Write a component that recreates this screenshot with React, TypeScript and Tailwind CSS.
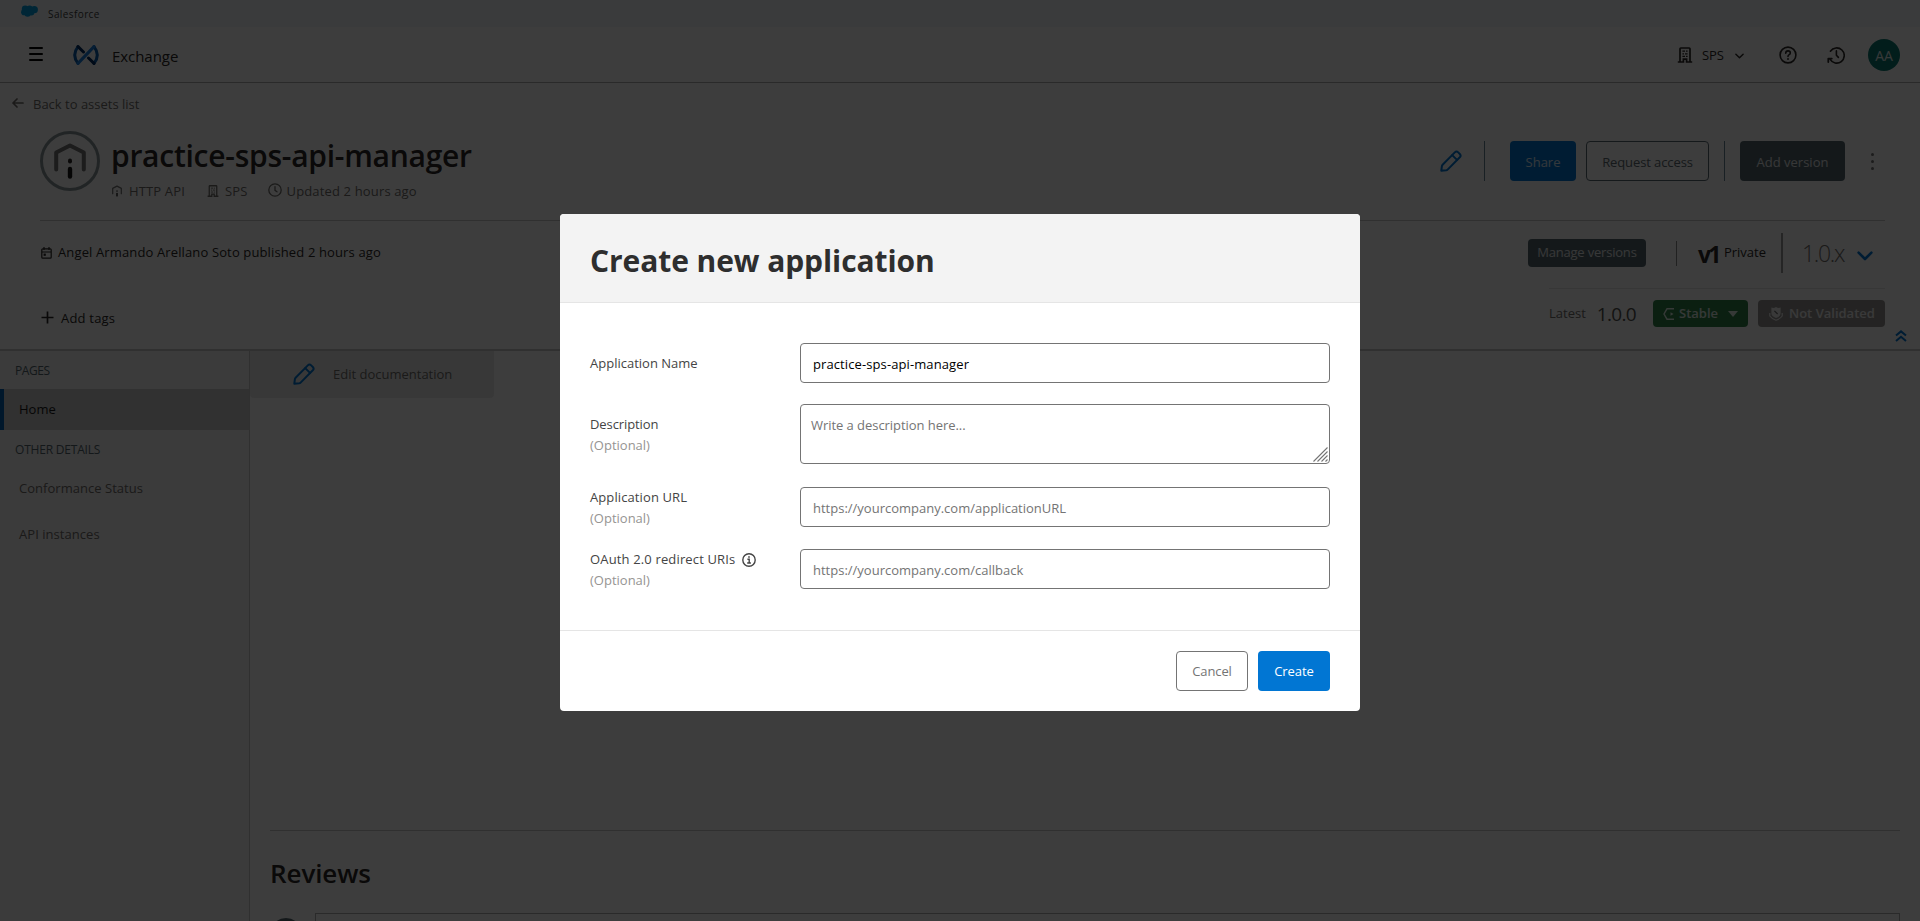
import type { ReactNode } from "react";

function Pencil({ className = "" }: { className?: string }) {
  return (
    <svg viewBox="0 0 22 22" fill="none" stroke="currentColor" strokeWidth="2" strokeLinejoin="round" strokeLinecap="round" className={`h-[22px] w-[22px] ${className}`}>
      <path d="M1.3 20.7L1.9 16.2Q2 15.4 2.6 14.8L14.8 2.4Q16.5 0.7 18.2 2.4L19.8 4Q21.4 5.7 19.8 7.3L7.6 19.6Q7 20.2 6.2 20.3Z" />
      <path d="M12.2 5.1L17 9.9" />
    </svg>
  );
}

function Building({ className = "" }: { className?: string }) {
  return (
    <svg viewBox="0 0 16 16" fill="none" stroke="currentColor" strokeWidth="1.7" className={className}>
      <path d="M3 15V1.8Q3 1 3.8 1H12.2Q13 1 13 1.8V15" />
      <path d="M0.8 15H6.4V12.2H9.6V15H15.2" />
      <path d="M5.4 4.2H8M9 4.2H10.6M5.4 6.8H7M8 6.8H10.6M5.4 9.4H8M9 9.4H10.6" strokeWidth="1.2" />
    </svg>
  );
}

function ApiGlyph({ className = "" }: { className?: string }) {
  return (
    <svg viewBox="0 0 32 36" fill="none" strokeLinecap="round" className={className}>
      <path d="M2.2 26.5V9.6L16 2.4L29.8 9.6V26.5" stroke="#747474" strokeWidth="4" strokeLinejoin="round" />
      <path d="M16 17.4V18.6" stroke="#2b2826" strokeWidth="4" />
      <path d="M16 26V33.6" stroke="#181818" strokeWidth="4.4" />
    </svg>
  );
}

function TopBar() {
  return (
    <div className="flex h-[27px] items-center bg-[#f2f6fa] pl-[21px]">
      <svg viewBox="0 0 17 12" className="-mt-[5px] h-3 w-[17px] fill-[#00a1e0]">
        <circle cx="4.2" cy="3.8" r="3.4" />
        <circle cx="8.6" cy="3.4" r="3" />
        <circle cx="13.3" cy="4.7" r="3.6" />
        <circle cx="3.2" cy="7.2" r="3.1" />
        <circle cx="6.6" cy="8.6" r="3.2" />
        <circle cx="10.4" cy="7.6" r="3" />
      </svg>
      <span className="ml-2.5 pt-0.5 text-[10px] leading-[27px] tracking-[0.4px] text-[#3e3e3c]">Salesforce</span>
    </div>
  );
}

function Header() {
  return (
    <header className="flex h-14 items-center border-b border-[#b0b0b0] pr-5 pl-[29px] text-[#2b2826]">
      <div className="-mt-0.5 flex w-3.5 flex-col gap-1">
        <span className="h-0.5 rounded bg-black" />
        <span className="h-0.5 rounded bg-black" />
        <span className="h-0.5 rounded bg-black" />
      </div>
      <svg viewBox="0 0 26 20" fill="none" strokeWidth="3" strokeLinecap="round" strokeLinejoin="round" className="ml-[30px] h-5 w-[26px]">
        <path d="M5 1.6Q-1.6 10 5 18.4" stroke="#0b5cab" />
        <path d="M21 1.6Q27.6 10 21 18.4" stroke="#0b5cab" />
        <path d="M5 1.6L10.5 7M15.5 13L21 18.4" stroke="#032d60" />
        <path d="M5 18.4L21 1.6" stroke="#1b7fdc" />
      </svg>
      <span className="ml-[13px] pt-[3px] text-[15px] tracking-[-0.05px]">Exchange</span>
      <div className="ml-auto flex items-center">
        <Building className="h-4 w-4" />
        <span className="ml-[9px] pt-[3px] text-[13px]">SPS</span>
        <svg viewBox="0 0 10 6" fill="none" stroke="currentColor" strokeWidth="1.6" strokeLinecap="round" strokeLinejoin="round" className="mt-0.5 ml-[11px] h-1.5 w-[9px]">
          <path d="M1 1L5 5L9 1" />
        </svg>
        <svg viewBox="0 0 18 18" fill="none" stroke="currentColor" strokeWidth="1.6" strokeLinecap="round" className="ml-[35px] h-[18px] w-[18px]">
          <circle cx="9" cy="9" r="7.9" />
          <path d="M6.7 7.2Q6.8 4.9 9 4.9Q11.3 4.9 11.3 6.9Q11.3 8.1 9.9 8.9Q9 9.4 9 10.4" />
          <path d="M9 12.9V13" strokeWidth="1.9" />
        </svg>
        <svg viewBox="0 0 18 18" fill="none" stroke="currentColor" strokeWidth="1.6" strokeLinecap="round" strokeLinejoin="round" className="ml-[30px] h-[18px] w-[18px]">
          <path d="M3.4 5.2A7.6 7.6 0 1 1 3 13.2" />
          <path d="M1.3 16V12.6H4.8" strokeWidth="1.8" />
          <path d="M9.4 4.9V9.2L11.4 11.4" />
        </svg>
        <span className="ml-[23px] flex h-8 w-8 items-center justify-center rounded-full bg-[#0b7a72] pt-0.5 text-[14px] text-[#e3ecec]">AA</span>
      </div>
    </header>
  );
}

function AssetHeader() {
  return (
    <section className="h-[268px] border-b-2 border-[#c9c9c9]">
      <div className="flex h-[42px] items-center pl-3 text-[#706e6b]">
        <svg viewBox="0 0 12 10" fill="none" stroke="currentColor" strokeWidth="1.7" strokeLinecap="round" strokeLinejoin="round" className="-mt-0.5 h-2.5 w-3">
          <path d="M11 5H1M5 1L1 5L5 9" />
        </svg>
        <span className="ml-[9px] pt-0.5 text-[13px]">Back to assets list</span>
      </div>

      <div className="mr-[35px] ml-10 flex h-24 border-b border-[#c9c9c9]">
        <div className="mt-1.5 flex h-[60px] w-[60px] items-center justify-center rounded-full border-[3px] border-[#8b989b] pt-1">
          <ApiGlyph className="-mt-1 h-9 w-8" />
        </div>
        <div className="ml-[11px]">
          <h1 className="mt-[9px] h-[44px] text-[30px] leading-[44px] font-semibold tracking-[-0.26px] text-[#2b2826]">practice-sps-api-manager</h1>
          <div className="mt-[3px] flex h-5 items-center text-[13px] leading-5 tracking-[0.15px] text-[#706e6b]">
            <ApiGlyph className="ml-px h-3 w-2.5" />
            <span className="ml-[7px]">HTTP API</span>
            <Building className="ml-[22px] h-3 w-3" />
            <span className="ml-1.5">SPS</span>
            <svg viewBox="0 0 14 14" fill="none" stroke="currentColor" strokeWidth="1.3" strokeLinecap="round" className="-mt-0.5 ml-5 h-3.5 w-3.5">
              <circle cx="7" cy="7" r="6.2" />
              <path d="M7 3.6V7.4L9 8.8" />
            </svg>
            <span className="ml-[5px]">Updated 2 hours ago</span>
          </div>
        </div>
        <div className="mt-4 ml-auto flex h-10 items-center text-[13px] leading-[38px]">
          <Pencil className="text-[#0176d3]" />
          <span className="ml-[22px] h-10 w-px bg-[#6b8795]" />
          <button className="ml-[25px] h-10 w-[66px] rounded bg-[#0176d3] pt-0.5 text-white/85">Share</button>
          <button className="ml-2.5 h-10 w-[123px] rounded border border-[#5a6b72] pt-px tracking-[-0.1px] text-[#5c6a70]">Request access</button>
          <span className="ml-[15px] h-10 w-px bg-[#6b8795]" />
          <button className="ml-[15px] h-10 w-[105px] rounded bg-[#54676f] pt-0.5 text-white/85">Add version</button>
          <span className="mt-px mr-[11px] ml-[26px] flex flex-col gap-1">
            <span className="h-[3px] w-[3px] rounded-full bg-[#747474]" />
            <span className="h-[3px] w-[3px] rounded-full bg-[#747474]" />
            <span className="h-[3px] w-[3px] rounded-full bg-[#747474]" />
          </span>
        </div>
      </div>

      <div className="flex justify-between pr-[35px] pl-[41px] text-[13px] text-[#2b2826]">
        <div className="pt-[22px]">
          <div className="flex h-5 items-center">
            <svg viewBox="0 0 11 12" fill="none" stroke="currentColor" strokeWidth="1.2" className="h-3 w-[11px]">
              <rect x="0.8" y="1.8" width="9.4" height="9.4" rx="1" />
              <path d="M3 0V3M8 0V3M1 5H10" />
              <rect x="3.2" y="7.2" width="1" height="1" fill="currentColor" />
            </svg>
            <span className="ml-1.5 tracking-[0.13px]">Angel Armando Arellano Soto published 2 hours ago</span>
          </div>
          <div className="mt-[46px] flex h-5 items-center">
            <svg viewBox="0 0 13 13" stroke="currentColor" strokeWidth="1.7" className="-mt-[3px] h-[13px] w-[13px]">
              <path d="M6.5 0.5V12.5M0.5 6.5H12.5" />
            </svg>
            <span className="ml-[7px] tracking-[0.2px]">Add tags</span>
          </div>
        </div>
        <div className="flex flex-col items-end">
          <div className="mb-[3px] flex h-16 items-center">
            <button className="h-7 w-[118px] rounded bg-[#54676f] tracking-[-0.2px] text-white/85">Manage versions</button>
            <span className="ml-[30px] h-[25px] w-px bg-[#8a8a8a]" />
            <span className="ml-[21px] w-[26px] pt-0.5 text-[23px] font-bold tracking-[-2.8px]">v1</span>
            <span>Private</span>
            <span className="ml-[15px] h-10 w-0.5 bg-[#9a9a9a]" />
            <span className="ml-[19px] w-[45px] pt-px text-[23px] font-light tracking-[-1.3px] text-[#706e6b]">1.0.x</span>
            <svg viewBox="0 0 16 10" fill="none" stroke="#0176d3" strokeWidth="2.6" strokeLinecap="round" strokeLinejoin="round" className="mt-1.5 mr-3 ml-2.5 h-2.5 w-4">
              <path d="M1.6 1.6L8 8L14.4 1.6" />
            </svg>
          </div>
          <div className="flex h-[59px] w-[336px] items-start border-t border-[#e5e5e5] pt-[11px]">
            <span className="mt-1 text-[#706e6b]">Latest</span>
            <span className="ml-[11px] w-[43px] text-[19px] leading-7 tracking-[-0.7px] text-[#514f4d]">1.0.0</span>
            <div className="ml-auto flex h-[27px] w-[95px] items-center rounded bg-[#2e844a] pl-2.5 font-semibold text-white/85">
              <svg viewBox="0 0 12 12" fill="none" stroke="currentColor" strokeWidth="1.4" className="h-3 w-3">
                <path d="M11 0.8H4L1 6L4 11.2H11" />
                <path d="M7.5 4.2L10.5 6L7.5 7.8Z" fill="currentColor" stroke="none" />
              </svg>
              <span className="ml-1 pt-px">Stable</span>
              <svg viewBox="0 0 10 6" className="ml-2.5 h-1.5 w-2.5 fill-current">
                <path d="M0 0H10L5 6Z" />
              </svg>
            </div>
            <div className="ml-2.5 flex h-[27px] w-[127px] items-center rounded bg-[#969492] pl-[11px] font-semibold text-white/85">
              <svg viewBox="0 0 14 14" className="h-3.5 w-3.5 fill-current">
                <path d="M2.4 0.6Q5 1.4 7 0Q9 1.4 11.6 0.6V6.6Q11.6 9.4 7 11Q2.4 9.4 2.4 6.6Z" />
                <path d="M0.8 6V9Q2.6 11.6 7 13.2Q11.4 11.6 13.2 9V6" fill="none" stroke="currentColor" strokeWidth="1.2" />
                <path d="M5.4 3.8L8.6 7" stroke="#6b6b6b" strokeWidth="1.2" />
              </svg>
              <span className="ml-[6px] pt-px whitespace-nowrap">Not Validated</span>
            </div>
          </div>
        </div>
      </div>
      <svg viewBox="0 0 12 12" fill="none" stroke="#0176d3" strokeWidth="2" className="-mt-[17px] ml-auto mr-[13px] h-3 w-3">
        <path d="M1 5.6L6 1.4L11 5.6M1 11L6 6.8L11 11" />
      </svg>
    </section>
  );
}

function Sidebar() {
  return (
    <nav className="w-[250px] shrink-0 border-r border-[#c9c9c9] bg-[#f5f5f5] text-[13px] text-[#706e6b]">
      <div className="flex h-[38px] items-center pt-px pl-[15px] text-[12px] tracking-[-0.45px] text-[#54676f]">PAGES</div>
      <div className="flex h-[41px] items-center border-l-4 border-[#005fb2] bg-[#cbcbcb] pt-px pl-[15px] text-[#181818]">Home</div>
      <div className="flex h-9 items-center pt-[3px] pl-[15px] text-[12px] tracking-[-0.2px] text-[#54676f]">OTHER DETAILS</div>
      <div className="flex h-[46px] items-center pl-[19px] tracking-[0.03px]">Conformance Status</div>
      <div className="flex h-[46px] items-center pl-[19px] tracking-[0.05px]">API instances</div>
    </nav>
  );
}

function Main() {
  return (
    <main className="flex-1">
      <div className="flex h-[47px] w-[244px] items-center rounded-b bg-[#ebebeb] pl-[43px] text-[13px] text-[#706e6b]">
        <Pencil className="-mt-px text-[#0176d3]" />
        <span className="ml-[18px] pt-px">Edit documentation</span>
      </div>
      <section className="mt-[432px] mr-5 ml-5 border-t border-[#c9c9c9]">
        <h2 className="mt-[22px] h-[41px] text-[26px] leading-10 font-semibold tracking-[-0.1px] text-[#2b2826]">Reviews</h2>
        <div className="mt-[19px] flex">
          <span className="mt-[5px] h-8 w-8 rounded-full bg-[#54676f]" />
          <div className="ml-[13px] h-20 flex-1 border border-[#b0b0b0]" />
        </div>
      </section>
    </main>
  );
}

function Field({ label, optional, className = "", top = "", children }: { label: ReactNode; optional?: boolean; className?: string; top?: string; children: ReactNode }) {
  return (
    <div className={`flex items-start ${className}`}>
      <div className={`w-[210px] shrink-0 leading-[21px] text-[#444444] ${top}`}>
        <div className="flex items-center">{label}</div>
        {optional && <div className="text-[#969492]">(Optional)</div>}
      </div>
      {children}
    </div>
  );
}

const inputClass = "h-10 w-[530px] rounded border border-[#747474] bg-white px-3 pt-px text-[13px] text-black outline-none placeholder:text-[#747474]";

function CreateDialog() {
  return (
    <div role="dialog" className="mt-[214px] h-[497px] w-[800px] overflow-hidden rounded bg-white text-[13px]">
      <div className="flex h-[89px] items-center border-b border-[#e5e5e5] bg-[#f3f3f3] px-[30px] pt-1 text-[30px] font-bold tracking-[-0.08px] text-[#2e2e2e]">
        Create new application
      </div>
      <div className="h-[327px] px-[30px] pt-10">
        <Field label="Application Name" top="pt-[10px]">
          <input className={`${inputClass} tracking-[0.1px]`} defaultValue="practice-sps-api-manager" />
        </Field>
        <Field label={<span className="tracking-[-0.1px]">Description</span>} optional className="mt-[21px]" top="pt-[10px]">
          <div className="relative">
            <textarea className="block h-[60px] w-[530px] resize-none rounded border border-[#747474] bg-white px-2.5 pt-[10px] leading-5 tracking-[-0.05px] outline-none placeholder:text-[#747474]" placeholder="Write a description here..." />
            <svg viewBox="0 0 15 15" stroke="#747474" strokeWidth="1.1" className="absolute right-[2px] bottom-[2px] h-[15px] w-[15px]">
              <path d="M0.5 14.5L14.5 0.5M4.5 14.5L14.5 4.5M8.5 14.5L14.5 8.5M12.5 14.5L14.5 12.5" />
            </svg>
          </div>
        </Field>
        <Field label={<span className="tracking-[0.1px]">Application URL</span>} optional className="mt-[23px]">
          <input className={inputClass} placeholder="https://yourcompany.com/applicationURL" />
        </Field>
        <Field
          label={
            <>
              <span className="tracking-[0.15px]">OAuth 2.0 redirect URIs</span>
              <svg viewBox="0 0 14 14" fill="none" stroke="currentColor" strokeWidth="1.4" className="ml-[7px] h-3.5 w-3.5">
                <circle cx="7" cy="7" r="6.2" />
                <path d="M5.4 6.2H7.2V9.8M5.2 10H8.9" />
                <path d="M6.2 4H7.8" />
              </svg>
            </>
          }
          optional
          className="mt-5"
        >
          <input className={inputClass} placeholder="https://yourcompany.com/callback" />
        </Field>
      </div>
      <div className="flex h-[81px] justify-end gap-2.5 border-t border-[#e5e5e5] px-[30px] pt-5">
        <button className="h-10 w-[72px] rounded border border-[#747474] pt-0.5 tracking-[-0.1px] text-[#747474]">Cancel</button>
        <button className="h-10 w-[72px] rounded bg-[#0176d3] pt-0.5 tracking-[-0.05px] text-white">Create</button>
      </div>
    </div>
  );
}

export default function App() {
  return (
    <div className="relative h-[921px] w-full overflow-hidden bg-white font-['Open_Sans','Noto_Sans',sans-serif]">
      <TopBar />
      <Header />
      <AssetHeader />
      <div className="flex h-[570px] overflow-hidden">
        <Sidebar />
        <Main />
      </div>
      <div className="absolute inset-0 flex items-start justify-center bg-black/76">
        <CreateDialog />
      </div>
    </div>
  );
}
